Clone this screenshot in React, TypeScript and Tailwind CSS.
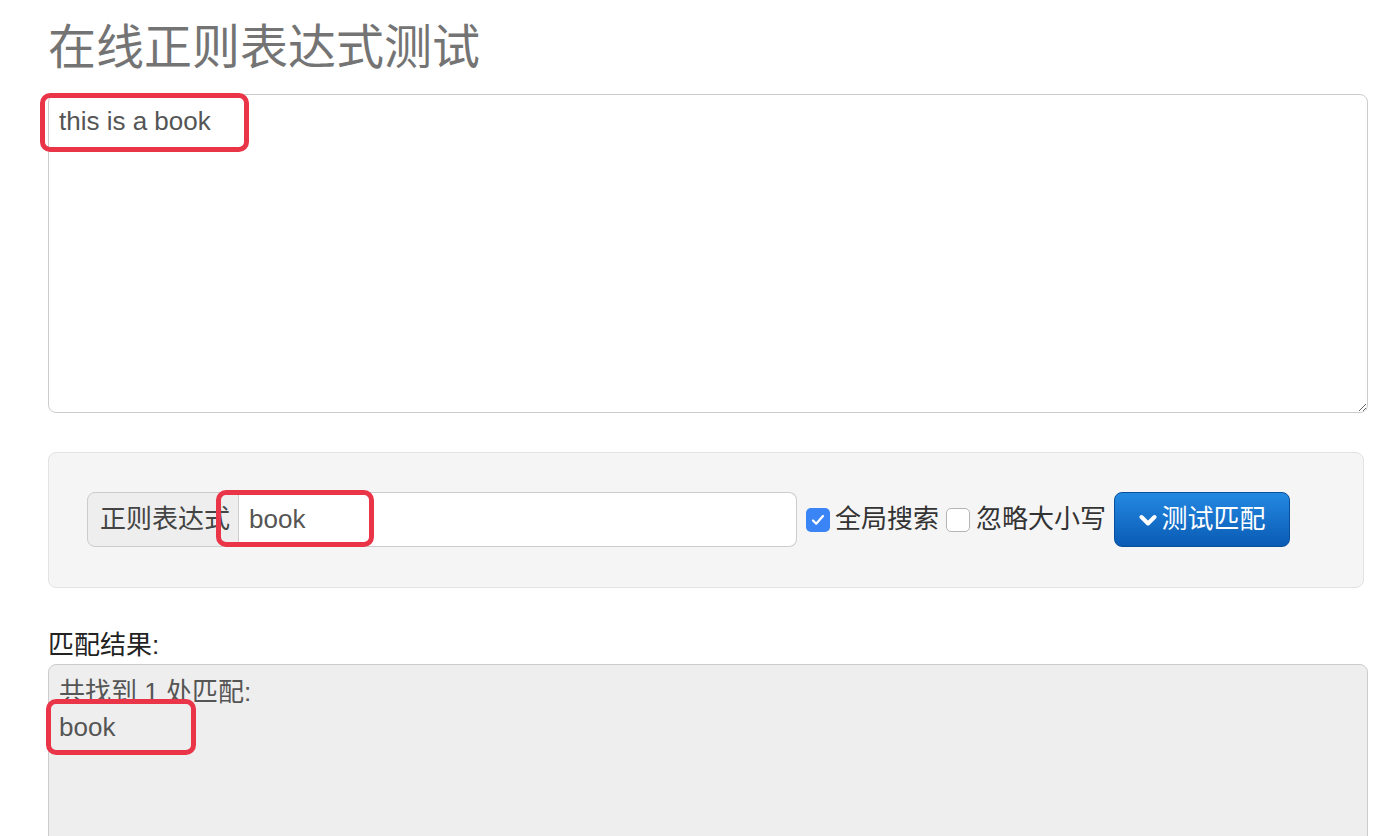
import React from "react";

const FONT = "font-['Liberation_Sans','Noto_Sans_CJK_SC',sans-serif]";

function Highlight({ className }: { className: string }) {
  return (
    <div
      className={`pointer-events-none absolute rounded-[10px] border-[5px] border-[#ea3548] ${className}`}
    />
  );
}

function CheckOn() {
  return (
    <span className="flex h-[24px] w-[24px] items-center justify-center rounded-[5px] bg-[#3a84f5]">
      <svg width="18" height="18" viewBox="0 0 18 18" fill="none">
        <path d="M4 9.5l3.2 3.2L14 5" stroke="white" strokeWidth="2.2" strokeLinecap="round" strokeLinejoin="round" />
      </svg>
    </span>
  );
}

function CheckOff() {
  return <span className="h-[24px] w-[24px] rounded-[5px] border border-[#b5b5b5] bg-white" />;
}

export default function App() {
  const [text, setText] = React.useState("this is a book");
  const [pattern, setPattern] = React.useState("book");

  return (
    <div className={`h-[836px] overflow-hidden bg-white text-[#333] ${FONT}`}>
      <div className="pl-[48px] pr-[28px] pt-[20px]">
        {/* title */}
        <h1 className="text-[48px] leading-[56px] text-[#747474]">在线正则表达式测试</h1>

        {/* source text */}
        <div className="relative mt-[18px]">
          <textarea
            value={text}
            onChange={(e) => setText(e.target.value)}
            className="block h-[319px] w-full rounded-[8px] border border-[#cccccc] bg-white px-[10px] py-[9px] text-[26px] leading-[34px] text-[#555] outline-none"
          />
          <Highlight className="left-[-8px] top-[-1px] h-[59px] w-[209px]" />
        </div>

        {/* well */}
        <div className="mt-[39px] h-[136px] w-[1316px] rounded-[8px] border border-[#e3e3e3] bg-[#f5f5f5] pl-[38px] pt-[39px]">
          <div className="flex items-center">
            <div className="relative flex h-[55px]">
              <span className="flex w-[152px] items-center rounded-l-[8px] border border-[#cccccc] bg-[#eeeeee] pl-[12px] text-[26px] text-[#444]">
                正则表达式
              </span>
              <input
                value={pattern}
                onChange={(e) => setPattern(e.target.value)}
                className="w-[558px] rounded-r-[8px] border border-l-0 border-[#cccccc] bg-white pl-[10px] text-[26px] text-[#555] outline-none"
              />
              <Highlight className="left-[129px] top-[-2px] h-[57px] w-[158px]" />
            </div>

            <label className="ml-[9px] flex items-center gap-[5px] text-[26px] text-[#333]">
              <CheckOn />
              全局搜索
            </label>
            <label className="ml-[7px] flex items-center gap-[6px] text-[26px] text-[#333]">
              <CheckOff />
              忽略大小写
            </label>

            <button className="ml-[8px] flex h-[55px] w-[176px] items-center justify-center gap-[5px] rounded-[8px] border border-[#0a4f9c] bg-gradient-to-b from-[#2489e2] to-[#0a5bb4] text-[26px] text-white">
              <svg width="18" height="14" viewBox="0 0 18 14">
                <path d="M2.5 4l6.5 6.5L15.5 4" fill="none" stroke="white" strokeWidth="4" strokeLinecap="round" strokeLinejoin="round" />
              </svg>
              测试匹配
            </button>
          </div>
        </div>

        {/* result */}
        <div className="mt-[39px] text-[26px] leading-[36px] text-[#222]">匹配结果:</div>
        <div className="relative mt-[1px] h-[300px] rounded-[8px] border border-[#cccccc] bg-[#eeeeee] px-[10px] pt-[10px] text-[26px] leading-[35px] text-[#555]">
          <div>共找到 1 处匹配:</div>
          <div>book</div>
          <Highlight className="left-[-3px] top-[34px] h-[56px] w-[150px]" />
        </div>
      </div>
    </div>
  );
}
